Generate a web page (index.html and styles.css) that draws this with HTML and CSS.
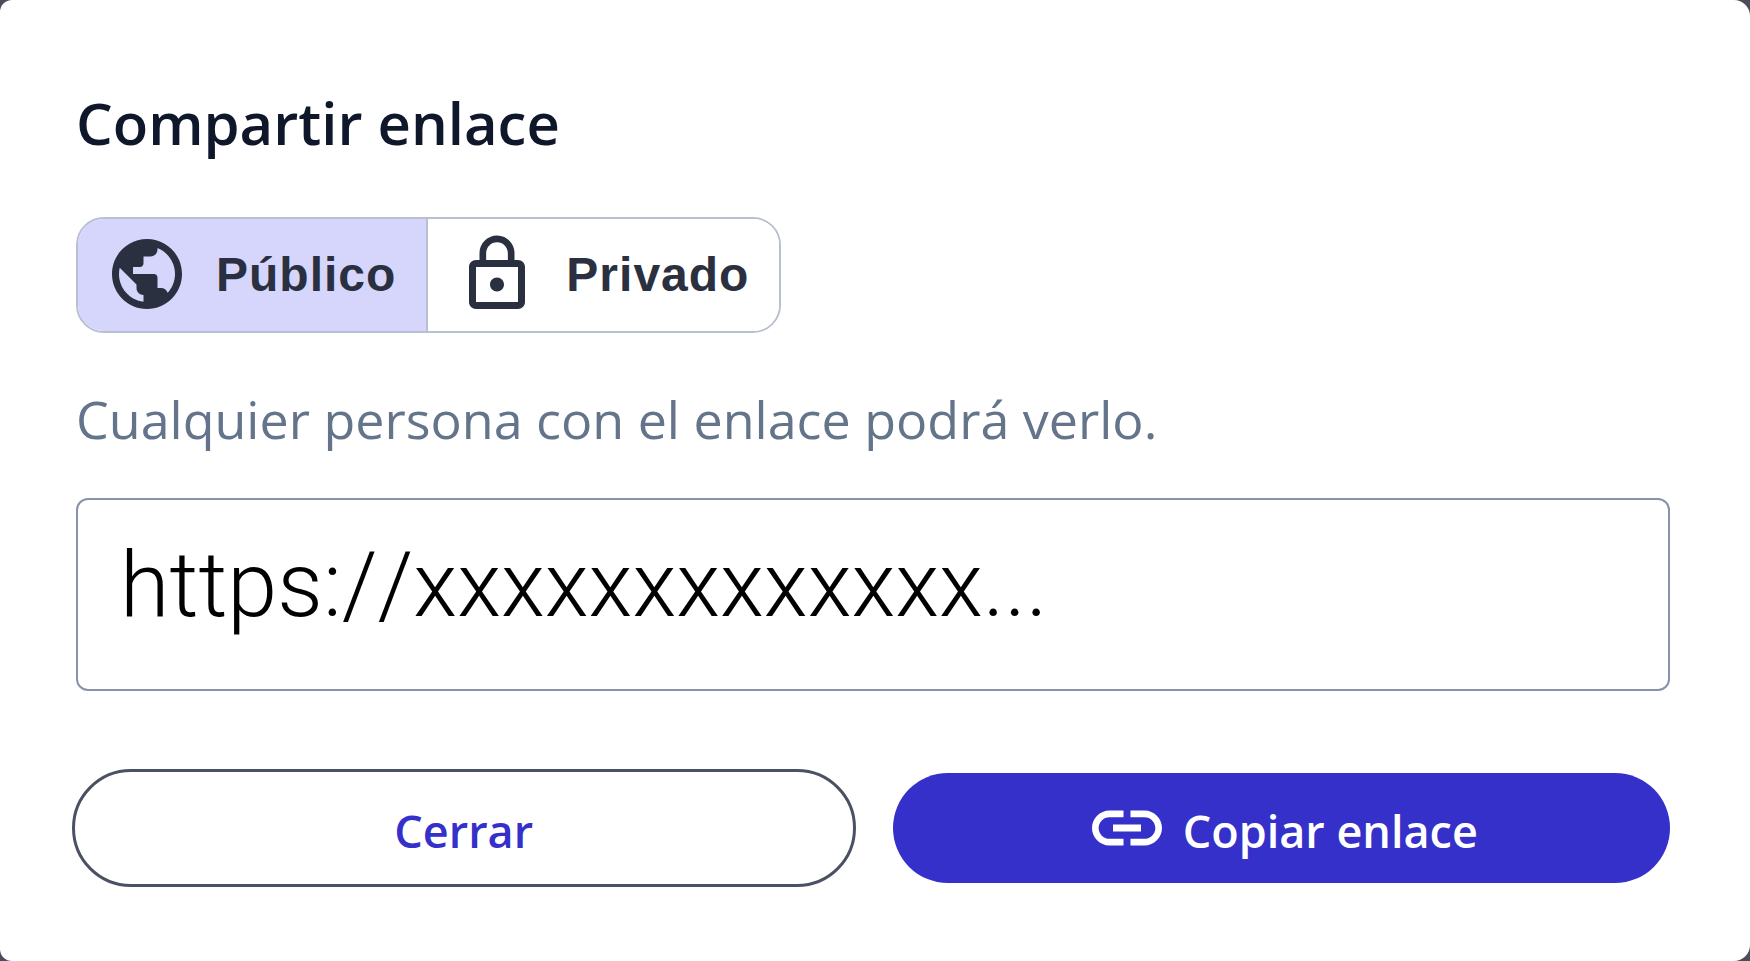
FILE: index.html
```html
<!DOCTYPE html>
<html lang="es">
<head>
    <meta charset="UTF-8">
    <meta name="viewport" content="width=device-width, initial-scale=1.0">
    <title>Compartir enlace</title>
    <link rel="stylesheet" href="styles.css">
</head>
<body>

    <main class="dialog">
        <h1>Compartir enlace</h1>

        <!-- Visibility toggle -->
        <div class="toggle">
            <button type="button" class="toggle-option selected" aria-pressed="true">
                <svg class="toggle-icon" viewBox="0 0 24 24" aria-hidden="true">
                    <path d="M12 2C6.48 2 2 6.48 2 12s4.48 10 10 10 10-4.48 10-10S17.52 2 12 2zm-1 17.93c-3.95-.49-7-3.85-7-7.93 0-.62.08-1.21.21-1.79L9 15v1c0 1.1.9 2 2 2v1.93zm6.9-2.54c-.26-.81-1-1.39-1.9-1.39h-1v-3c0-.55-.45-1-1-1H8v-2h2c.55 0 1-.45 1-1V7h2c1.1 0 2-.9 2-2v-.41c2.93 1.19 5 4.06 5 7.41 0 2.08-.8 3.97-2.1 5.39z"/>
                </svg>
                <span>Público</span>
            </button>
            <button type="button" class="toggle-option" aria-pressed="false">
                <svg class="toggle-icon" viewBox="0 0 24 24" aria-hidden="true">
                    <path d="M12 17c1.1 0 2-.9 2-2s-.9-2-2-2-2 .9-2 2 .9 2 2 2zm6-9h-1V6c0-2.76-2.24-5-5-5S7 3.24 7 6v2H6c-1.1 0-2 .9-2 2v10c0 1.1.9 2 2 2h12c1.1 0 2-.9 2-2V10c0-1.1-.9-2-2-2zM8.9 6c0-1.71 1.39-3.1 3.1-3.1s3.1 1.39 3.1 3.1v2H8.9V6zM18 20H6V10h12v10z"/>
                </svg>
                <span>Privado</span>
            </button>
        </div>

        <label class="hint" for="link">Cualquier persona con el enlace podrá verlo.</label>
        <input class="link" id="link" type="text" value="https://xxxxxxxxxxxxx..." readonly>

        <!-- Actions -->
        <div class="actions">
            <button type="button" class="btn btn-close"><span>Cerrar</span></button>
            <button type="button" class="btn btn-copy">
                <svg class="btn-icon" viewBox="0 0 24 24" aria-hidden="true">
                    <path d="M3.9 12c0-1.71 1.39-3.1 3.1-3.1h4V7H7c-2.76 0-5 2.24-5 5s2.24 5 5 5h4v-1.9H7c-1.71 0-3.1-1.39-3.1-3.1zM8 13h8v-2H8v2zm9-6h-4v1.9h4c1.71 0 3.1 1.39 3.1 3.1s-1.39 3.1-3.1 3.1h-4V17h4c2.76 0 5-2.24 5-5s-2.24-5-5-5z"/>
                </svg>
                <span>Copiar enlace</span>
            </button>
        </div>
    </main>

</body>
</html>
```
FILE: styles.css
```css
* {
    box-sizing: border-box;
}

body {
    margin: 0;
    background-color: #4b4d5c;
    font-family: "Open Sans", "Noto Sans", sans-serif;
}

.dialog {
    min-height: 100vh;
    padding: 83px 80px 72px 76px;
    background-color: #fff;
    border-radius: 12px 16px 16px 12px;
}

h1 {
    margin: 0 0 54px;
    font-size: 58px;
    font-weight: 600;
    line-height: 80px;
    color: #0f172a;
}

.toggle {
    display: inline-flex;
    border: 2px solid #b8bfd0;
    border-radius: 28px;
    overflow: hidden;
}

.toggle-option {
    display: flex;
    align-items: center;
    gap: 27px;
    height: 112px;
    padding: 0 30px 2px 27px;
    border: none;
    background-color: #fff;
    color: #2a303f;
    font-family: "Liberation Sans", Arial, sans-serif;
    font-size: 48px;
    font-weight: bold;
    letter-spacing: 1px;
    cursor: pointer;
}

.toggle-option + .toggle-option {
    border-left: 2px solid #b8bfd0;
}

.toggle-option.selected {
    background-color: #d6d6fc;
}

.toggle-icon {
    width: 84px;
    height: 84px;
    fill: currentColor;
}

.hint {
    display: block;
    margin: 46px 0 39px;
    font-size: 52px;
    line-height: 80px;
    color: #64748b;
}

.link {
    display: block;
    width: 100%;
    height: 193px;
    padding: 0 42px 18px;
    border: 2px solid #8a91aa;
    border-radius: 12px;
    background-color: #fff;
    color: #000;
    font-family: Roboto, sans-serif;
    font-size: 90px;
    font-weight: 300;
    font-kerning: none;
    outline: none;
}

.actions {
    display: flex;
    align-items: center;
    gap: 37px;
    margin: 78px 0 0 -4px;
}

.btn {
    display: flex;
    flex: 1;
    align-items: center;
    justify-content: center;
    gap: 14px;
    height: 110px;
    padding: 0;
    border: none;
    border-radius: 60px;
    font-family: inherit;
    font-size: 45px;
    font-weight: 600;
    cursor: pointer;
}

.btn span {
    padding-top: 4px;
}

.btn-close {
    height: 118px;
    border: 3px solid #4a5162;
    background-color: #fff;
    color: #3530c9;
}

.btn-copy {
    background-color: #3530c9;
    color: #fff;
}

.btn-icon {
    width: 84px;
    height: 84px;
    fill: currentColor;
}
```
